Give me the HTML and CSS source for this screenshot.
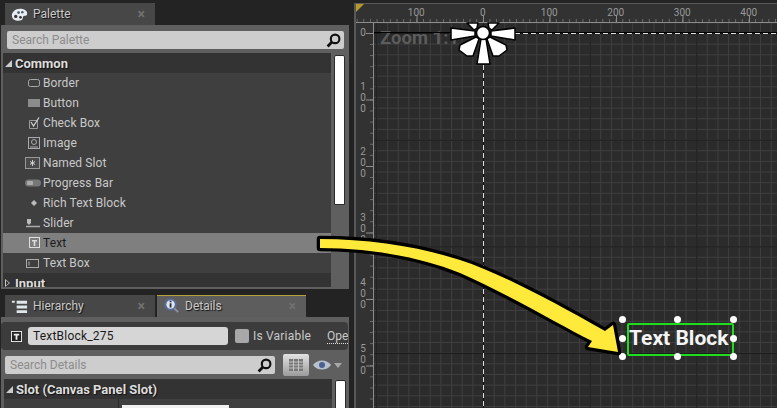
FILE: index.html
```html
<!DOCTYPE html>
<html lang="en">
<head>
  <meta charset="UTF-8">
  <title>UMG Designer - Text Block</title>
  <link rel="stylesheet" href="styles.css">
</head>
<body>

<div class="side">
  <div class="tabs">
    <div class="tab">
      <svg class="tab-icon" viewBox="0 0 18 14"><path d="M1 9C0 4 6 0 11 1c4 .7 7 3 6 6-.6 2-3 1-4 2-1 1 0 3-2 4-3 1-9 1-10-4z" fill="#e8ecf0"/><circle cx="5" cy="9" r="1.8" fill="#333"/><circle cx="8" cy="5" r="1.4" fill="#456"/><circle cx="12" cy="4.5" r="1.3" fill="#456"/><circle cx="10" cy="10" r="1.4" fill="#333"/></svg>
      <span class="tab-label">Palette</span>
      <span class="tab-close">×</span>
    </div>
  </div>
  <div class="panel palette">
    <div class="search">
      <span>Search Palette</span>
      <svg class="lens" viewBox="0 0 14 14"><circle cx="8.5" cy="5.5" r="4" fill="none" stroke="#111" stroke-width="2"/><path d="M5.5 8.5 1.5 12.5" stroke="#111" stroke-width="2.6"/></svg>
    </div>
    <div class="palette-body">
      <div class="list">
        <div class="group"><i class="caret"></i>Common</div>
        <div class="item">
          <svg viewBox="0 0 14 14"><rect x="1.5" y="3.5" width="11" height="7" rx="2" fill="none" stroke="#aaa"/></svg>Border
        </div>
        <div class="item">
          <svg viewBox="0 0 14 14"><rect x="1" y="3" width="12" height="8" fill="#8c8c8c"/></svg>Button
        </div>
        <div class="item">
          <svg viewBox="0 0 14 14"><path d="M2.5 4.5h8v8h-8z" fill="none" stroke="#999"/><path d="M4 6l2.5 4L12 1.500" fill="none" stroke="#ccc" stroke-width="1.300"/></svg>Check Box
        </div>
        <div class="item">
          <svg viewBox="0 0 14 14"><rect x="1.500" y="1.500" width="11" height="11" fill="none" stroke="#aaa"/><circle cx="7" cy="6" r="2.500" fill="none" stroke="#aaa"/><path d="M3 11h8" stroke="#aaa"/></svg>Image
        </div>
        <div class="item">
          <svg class="wide" viewBox="0 0 16 14"><rect x=".5" y="1.500" width="14" height="11" fill="#4a4a4a" stroke="#999"/><path d="M7.500 4v6M5 5.500l5 3M10 5.500l-5 3" stroke="#ccc"/></svg>Named Slot
        </div>
        <div class="item">
          <svg class="wide" viewBox="0 0 16 14"><rect x="0" y="3.500" width="16" height="7" rx="3.500" fill="#777"/><rect x="2" y="5" width="6" height="4" rx="1" fill="#aaa"/></svg>Progress Bar
        </div>
        <div class="item">
          <svg viewBox="0 0 14 14"><path d="M7 4l3 3-3 3-3-3z" fill="#bbb"/></svg>Rich Text Block
        </div>
        <div class="item">
          <svg class="wide" viewBox="0 0 16 14"><path d="M1 10.500h14" stroke="#aaa" stroke-width="1.500"/><path d="M2 3h4v4L4 9 2 7z" fill="#bbb"/></svg>Slider
        </div>
        <div class="item selected">
          <svg viewBox="0 0 14 14"><rect x="2.500" y="1.500" width="10" height="10" fill="none" stroke="#ddd"/><path d="M5 4h5v1.500H8.300V10H6.700V5.500H5z" fill="#ddd"/></svg><span>Text</span>
        </div>
        <div class="item">
          <svg class="wide" viewBox="0 0 16 14"><rect x="1.500" y="3.500" width="12" height="8" fill="none" stroke="#aaa"/><path d="M4 5.500v4" stroke="#aaa"/></svg>Text Box
        </div>
        <div class="group"><i class="caret-open"></i>Input</div>
      </div>
      <div class="track"><div class="thumb"></div></div>
    </div>
  </div>

  <div class="tabs lower">
    <div class="tab">
      <svg class="tab-icon" viewBox="0 0 18 14"><path d="M1 1h3v2H1zM6 1h11v3H6zM6 6h11v3H6zM6 11h11v3H6z" fill="#e0e6ea"/></svg>
      <span class="tab-label">Hierarchy</span>
      <span class="tab-close">×</span>
    </div>
    <div class="tab active">
      <svg class="tab-icon" viewBox="0 0 18 16"><circle cx="8" cy="7" r="6.500" fill="#5a6d9a"/><circle cx="8" cy="7" r="4.500" fill="#dfe4ee"/><path d="M7 3h2v1.500H7zM7 5.500h2V10H7z" fill="#234"/><path d="M12 11l4 4" stroke="#8a93a8" stroke-width="2"/></svg>
      <span class="tab-label">Details</span>
      <span class="tab-close">×</span>
    </div>
  </div>
  <div class="panel details">
    <div class="name-row">
      <svg class="name-icon" viewBox="0 0 12 12"><rect x=".5" y=".5" width="11" height="11" fill="#222" stroke="#eee"/><path d="M3 3h6v1.800H7V9.500H5V4.800H3z" fill="#eee"/></svg>
      <div class="name-input">TextBlock_275</div>
      <div class="check"></div>
      <span class="check-label">Is Variable</span>
      <span class="open-link">Ope</span>
    </div>
    <div class="search-row">
      <div class="search">
        <span>Search Details</span>
        <svg class="lens" viewBox="0 0 14 14"><circle cx="8.500" cy="5.500" r="4" fill="none" stroke="#111" stroke-width="2"/><path d="M5.500 8.500 1.500 12.500" stroke="#111" stroke-width="2.600"/></svg>
      </div>
      <div class="grid-btn">
        <svg viewBox="0 0 14 12"><path d="M0 0h14v12H0z" fill="#777"/><path d="M0 3h14M0 6h14M0 9h14M4.500 0v12M9.500 0v12" stroke="#d0d0d0" stroke-width=".8"/></svg>
      </div>
      <svg class="eye" viewBox="0 0 18 10"><path d="M0 5c4-6 14-6 18 0-4 6-14 6-18 0z" fill="#b8c0cc"/><circle cx="9" cy="5" r="3" fill="#4a6090"/></svg>
      <i class="eye-caret"></i>
    </div>
    <div class="slot-wrap">
      <div class="slot-main">
        <div class="group"><i class="caret"></i>Slot (Canvas Panel Slot)</div>
        <div class="slot-row"><div class="slot-field"></div></div>
      </div>
      <div class="thumb"></div>
    </div>
  </div>
</div>

<div class="viewport">
  <i class="corner"></i>
  <div class="ruler-top">
    <span>100</span><span>0</span><span>100</span><span>200</span><span>300</span><span>400</span>
  </div>
  <div class="view-row">
    <div class="ruler-left">
      <span>0</span>
      <span>1<br>0<br>0</span>
      <span>2<br>0<br>0</span>
      <span>3<br>0<br>0</span>
      <span>4<br>0<br>0</span>
      <span>5<br>0<br>0</span>
    </div>
    <div class="canvas">
      <div class="zoom">Zoom 1:1</div>
      <i class="axis-x"></i>
      <i class="axis-x-left"></i>
      <i class="axis-y"></i>
      <div class="text-block">Text Block</div>
      <i class="handle h-tl"></i><i class="handle h-tc"></i><i class="handle h-tr"></i>
      <i class="handle h-ml"></i><i class="handle h-mr"></i>
      <i class="handle h-bl"></i><i class="handle h-bc"></i><i class="handle h-br"></i>
    </div>
  </div>
</div>

<!-- star and arrow sit over both panels, in page coordinates -->
<svg class="overlay" viewBox="0 0 777 408">
  <g fill="#fff" stroke="#000" stroke-width="1.500" stroke-linejoin="round">
    <path d="M451 28v12l24-4v-5zM515 28v12l-24-4v-5z"/>
    <path d="M477 64h13l-4-25h-5z"/>
    <path d="M459 50l8 6h6l6-17-3-2-16 8zM507 50l-8 6h-6l-6-17 3-2 16 8z"/>
    <path d="M467 23h11l-1 5-3 2zM499 23h-11l1 5 3 2z"/>
    <circle cx="483" cy="33" r="6.500"/>
  </g>
  <path class="arrow" d="M320 239C370 239 420 247 460 260 500 273 550 300 605 331L613 325 618 352 588 347 592 341C560 325 510 295 460 273 420 257 370 248 320 248Z"/>
</svg>

</body>
</html>
```

FILE: styles.css
```css
html, body {
  margin: 0;
  height: 408px;
  overflow: hidden;
}
body {
  display: flex;
  gap: 4px;
  background: #232323;
  font-family: Roboto, "Liberation Sans", sans-serif;
  font-size: 12px;
  color: #c9c9c9;
}
i { display: block; }

/* left column */
.side {
  width: 350px;
  flex: none;
  display: flex;
  flex-direction: column;
}
.tabs {
  display: flex;
  gap: 2px;
  height: 22px;
  padding: 3px 0 0 5px;
}
.tabs.lower {
  height: 22px;
  padding-top: 6px;
}
.tab {
  width: 150px;
  display: flex;
  align-items: center;
  background: #474747;
  padding: 0 10px 0 6px;
  box-sizing: border-box;
}
.tab.active {
  width: 149px;
  background: #5d5d5d;
  border-top: 1px solid #b5a33a;
  padding-bottom: 2px;
}
.tab-icon {
  width: 17px;
  height: 15px;
  margin-right: 5px;
  flex: none;
}
.tab-label {
  flex: 1;
  text-shadow: 1px 1px 1px #111;
}
.tab-close {
  color: #707070;
  font-size: 14px;
  font-weight: bold;
}
.panel {
  background: #5f5f5f;
  margin-left: 1px;
  margin-right: 1px;
  padding: 6px 0 0;
  box-sizing: border-box;
}
.palette {
  height: 264px;
  overflow: hidden;
}
.search {
  height: 18px;
  display: flex;
  align-items: center;
  justify-content: space-between;
  background: #cdcdcd;
  border-radius: 2px;
  color: #8c8c8c;
  padding: 0 3px 0 5px;
  margin: 0 5px 0 6px;
}
.lens {
  width: 15px;
  height: 15px;
}
.palette-body {
  display: flex;
  margin-top: 4px;
  padding-left: 2px;
}
.list {
  width: 328px;
  background: #3f3f3f;
  height: 234px;
  overflow: hidden;
}
.group {
  height: 20px;
  display: flex;
  align-items: center;
  background: #333;
  color: #ddd;
  font-size: 13px;
  font-weight: bold;
  padding-left: 2px;
  text-shadow: 1px 1px 1px #111;
}
.caret {
  width: 0;
  height: 0;
  border-style: solid;
  border-width: 0 0 7px 7px;
  border-color: transparent transparent #ccc transparent;
  margin-right: 3px;
}
.caret-open {
  width: 5px;
  height: 8px;
  background: #c8c8c8;
  clip-path: polygon(0 0, 100% 50%, 0 100%, 0 0, 1px 18%, 1px 82%, 78% 50%, 1px 18%);
  margin-right: 5px;
}
.item {
  height: 20px;
  display: flex;
  align-items: center;
  padding-left: 24px;
  letter-spacing: .1px;
}
.item svg {
  width: 14px;
  height: 14px;
  margin-right: 2px;
  flex: none;
}
.item svg.wide {
  width: 16px;
  margin-left: -2px;
}
.item.selected {
  background: #7f7f7f;
  color: #1c1c1c;
}
.track {
  width: 16px;
  padding: 2px 0 0 3px;
  box-sizing: border-box;
}
.thumb {
  width: 11px;
  height: 150px;
  background: #fff;
  border-radius: 2px 2px 0 0;
  border: 1px solid #2c2c2c;
  box-sizing: border-box;
}

/* details panel */
.details {
  flex: 1;
  padding-top: 5px;
  overflow: hidden;
}
.name-row {
  height: 28px;
  display: flex;
  align-items: center;
  background: #3c3c3c;
  border-radius: 4px;
  padding-left: 10px;
  margin-right: 1px;
  overflow: hidden;
}
.name-icon {
  width: 11px;
  height: 11px;
  flex: none;
  margin-right: 6px;
}
.name-input {
  width: 200px;
  height: 18px;
  flex: none;
  background: #d6d6d6;
  border-radius: 3px;
  color: #1a1a1a;
  line-height: 18px;
  padding-left: 5px;
  box-sizing: border-box;
  letter-spacing: .2px;
}
.check {
  width: 14px;
  height: 14px;
  flex: none;
  background: #a8a8a8;
  border-radius: 2px;
  margin: 0 4px 0 7px;
}
.check-label {
  width: 74px;
  flex: none;
  letter-spacing: .2px;
}
.open-link {
  flex: none;
  border-bottom: 1px dotted #ddd;
  line-height: 14px;
}
.search-row {
  display: flex;
  align-items: center;
  margin-top: 3px;
  height: 24px;
}
.search-row .search {
  width: 270px;
  box-sizing: border-box;
  margin: 0 8px 0 4px;
  flex: none;
}
.grid-btn {
  width: 26px;
  height: 22px;
  flex: none;
  display: flex;
  align-items: center;
  justify-content: center;
  background: linear-gradient(#e2e2e2, #9c9c9c);
  border-radius: 2px;
  box-sizing: border-box;
}
.grid-btn svg {
  width: 14px;
  height: 12px;
}
.eye {
  width: 18px;
  height: 10px;
  margin-left: 4px;
  flex: none;
}
.eye-caret {
  width: 0;
  height: 0;
  border-style: solid;
  border-width: 5px 4px 0 4px;
  border-color: #a8a8a8 transparent transparent transparent;
  margin-left: 3px;
}
.slot-wrap {
  display: flex;
  margin-top: 2px;
  margin-left: 3px;
}
.slot-main {
  width: 328px;
  flex: none;
  background: #3f3f3f;
}
.slot-row {
  height: 20px;
  margin-left: 114px;
  padding: 6px 0 0 3px;
  box-sizing: border-box;
  border-left: 1px solid #2c2c2c;
}
.slot-field {
  width: 107px;
  height: 14px;
  background: #f0f0f0;
}
.slot-wrap .thumb {
  margin-left: 3px;
  margin-top: 1px;
}

/* viewport */
.viewport {
  flex: 1;
  min-width: 0;
  margin-top: 3px;
  background: #323232;
  border-left: 2px solid #585858;
  border-top: 1px solid #5a5a5a;
  position: relative;
}
.corner {
  position: absolute;
  left: 0;
  top: 0;
  width: 0;
  height: 0;
  border-style: solid;
  border-width: 8px 8px 0 0;
  border-color: #b59a2a transparent transparent transparent;
}
.ruler-top {
  height: 19px;
  display: flex;
  padding-left: 27px;
  color: #999;
  font-size: 10px;
  line-height: 18px;
  background:
    linear-gradient(#8c8c8c, #8c8c8c) 0 100% / 100% 1px no-repeat,
    linear-gradient(90deg, #8c8c8c 1px, transparent 1px) 60.500px 100% / 66.500px 7px repeat-x,
    linear-gradient(90deg, #6c6c6c 1px, transparent 1px) .650px 100% / 6.650px 4px repeat-x;
}
.ruler-top span {
  width: 66.500px;
  flex: none;
  text-align: center;
}
.view-row {
  display: flex;
  height: 385px;
}
.ruler-left {
  width: 18px;
  flex: none;
  display: flex;
  flex-direction: column;
  padding-top: 4px;
  box-sizing: border-box;
  color: #999;
  font-size: 10px;
  line-height: 11px;
  background:
    linear-gradient(#8c8c8c, #8c8c8c) 100% 0 / 1px 100% no-repeat,
    linear-gradient(#8c8c8c 1px, transparent 1px) 100% 10px / 8px 66.500px repeat-y,
    linear-gradient(#6c6c6c 1px, transparent 1px) 100% 10px / 4px 11.083px repeat-y;
}
.ruler-left span {
  display: block;
  width: 14px;
  text-align: center;
}
.ruler-left span:first-child { height: 55px; }
.ruler-left span + span { height: 66.500px; }
.canvas {
  flex: 1;
  position: relative;
  overflow: hidden;
  background-color: #2b2b2b;
  background-image:
    linear-gradient(90deg, #1b1b1b 1px, transparent 1px),
    linear-gradient(#1b1b1b 1px, transparent 1px),
    linear-gradient(90deg, #3f3f3f 1px, transparent 1px),
    linear-gradient(#3f3f3f 1px, transparent 1px);
  background-size: 106.670px 106.670px, 106.670px 106.670px, 10.667px 10.667px, 10.667px 10.667px;
  background-position: 109px 10px, 109px 10px, 109px 10px, 109px 10px;
}
.zoom {
  position: absolute;
  left: 6px;
  top: 4px;
  font-size: 18.500px;
  font-weight: bold;
  color: #5c5c5c;
}
.axis-x {
  position: absolute;
  left: 109px;
  right: 0;
  top: 10px;
  height: 1px;
  background: repeating-linear-gradient(90deg, #ddd 0 5px, #111 5px 8px);
  box-shadow: 0 -1px #000;
}
.axis-x-left {
  position: absolute;
  left: 0;
  width: 109px;
  top: 9px;
  height: 1px;
  background: #000;
}
.axis-y {
  position: absolute;
  left: 109px;
  top: 10px;
  bottom: 0;
  width: 1px;
  background: repeating-linear-gradient(#ddd 0 5px, #111 5px 8px);
}
.text-block {
  position: absolute;
  left: 253px;
  top: 300px;
  width: 107px;
  height: 33px;
  box-sizing: border-box;
  border: 2.500px solid #1fdc1f;
  border-radius: 2px;
  padding-right: 4px;
  color: #f4f4f4;
  font-size: 21px;
  font-weight: bold;
  line-height: 27px;
  text-align: center;
  white-space: nowrap;
}
.handle {
  position: absolute;
  width: 7px;
  height: 7px;
  border-radius: 50%;
  background: #fff;
}
.h-tl { left: 245px; top: 293px; }
.h-tc { left: 300px; top: 293px; }
.h-tr { left: 356px; top: 293px; }
.h-ml { left: 245px; top: 312px; }
.h-mr { left: 356px; top: 312px; }
.h-bl { left: 245px; top: 330px; }
.h-bc { left: 300px; top: 330px; }
.h-br { left: 356px; top: 330px; }

.overlay {
  position: absolute;
  left: 0;
  top: 0;
  width: 777px;
  height: 408px;
  pointer-events: none;
}
.arrow {
  fill: #ffe93b;
  stroke: #000;
  stroke-width: 6.500;
  stroke-linejoin: round;
  paint-order: stroke;
}
```
